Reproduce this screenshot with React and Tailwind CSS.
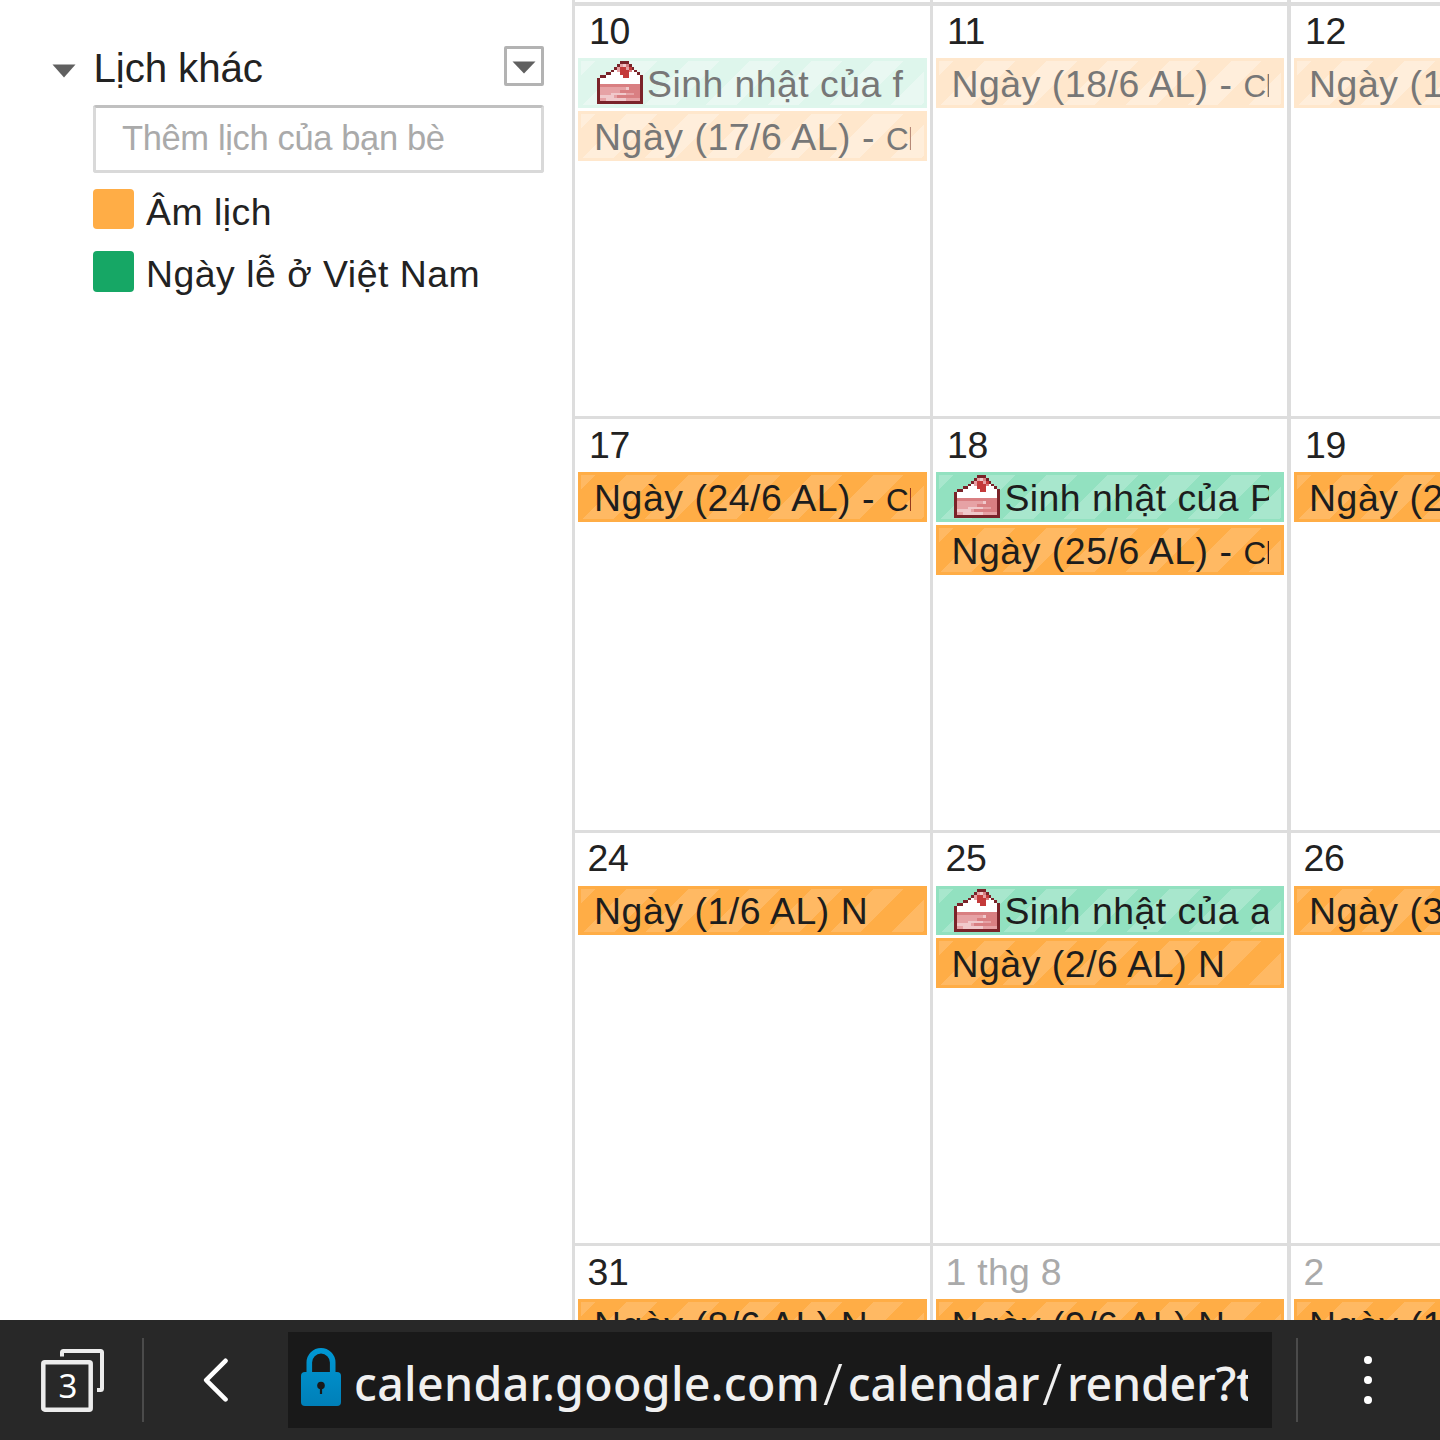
import React from "react";

const STRIPES =
  "bg-[repeating-linear-gradient(135deg,var(--light)_0px,var(--light)_10.6px,transparent_10.6px,transparent_32.5px,var(--light)_32.5px,var(--light)_43.5px)]";

const TONES = {
  orange: "bg-[#ffad46] text-[#1d1d1d] [--light:#ffb963]",
  green: "bg-[#92e1c0] text-[#1d1d1d] [--light:#a8e7cd]",
  orangePast: "bg-[#ffe7cc] text-[#777777] [--light:#ffeedb]",
  greenPast: "bg-[#def6ec] text-[#777777] [--light:#e9f8f2]",
};

const CAKE_COLORS = {
  d: "#7a2329",
  r: "#c43a3a",
  p: "#e6a2a5",
  m: "#d97f82",
  l: "#f0c9cb",
  w: "#ffffff",
};

const CAKE = [
  "........ddd.....",
  ".......dplmd....",
  "......dprrprd...",
  ".....dwprrrmwd..",
  "...ddwwwrrrwwwd.",
  ".ddwwwwwwrrwwwwd",
  "dwwwwwwwwwwwwwwd",
  "dwwwwwwwwwwwwwwd",
  "dmmmmmmmmmmmmmmd",
  "dppppppppplmmmmd",
  "dpppppppmmmmmmmd",
  "dpppplllllpppmmd",
  "dlllllpmmmmmmmmd",
  "dpplllllllpppppd",
  "dddddddddddddddd",
];

const WEEKS = [
  {
    row: "h-[410px]",
    head: "h-[52px] pl-[11px] leading-[50px]",
    first: "h-[50px] leading-[46px]",
    days: [
      {
        label: "10",
        events: [
          { tone: "greenPast", cake: true, text: "Sinh nhật của f" },
          { tone: "orangePast", text: "Ngày (17/6 AL) - ", note: "Ch" },
        ],
      },
      { label: "11", events: [{ tone: "orangePast", text: "Ngày (18/6 AL) - ", note: "Ch" }] },
      { label: "12", events: [{ tone: "orangePast", text: "Ngày (19" }] },
    ],
  },
  {
    row: "h-[411px]",
    head: "h-[53px] pl-[11px] leading-[52px]",
    first: "h-[50px] leading-[46px]",
    days: [
      { label: "17", events: [{ tone: "orange", text: "Ngày (24/6 AL) - ", note: "Ch" }] },
      {
        label: "18",
        events: [
          { tone: "green", cake: true, text: "Sinh nhật của P" },
          { tone: "orange", text: "Ngày (25/6 AL) - ", note: "Ch" },
        ],
      },
      { label: "19", events: [{ tone: "orange", text: "Ngày (26" }] },
    ],
  },
  {
    row: "h-[410px]",
    head: "h-[53px] pl-[9.5px] leading-[51px]",
    first: "h-[49px] leading-[44px]",
    days: [
      { label: "24", events: [{ tone: "orange", text: "Ngày (1/6 AL) N" }] },
      {
        label: "25",
        events: [
          { tone: "green", cake: true, text: "Sinh nhật của a" },
          { tone: "orange", text: "Ngày (2/6 AL) N" },
        ],
      },
      { label: "26", events: [{ tone: "orange", text: "Ngày (3/" }] },
    ],
  },
  {
    row: "h-[410px]",
    head: "h-[53px] pl-[9.5px] leading-[52px]",
    first: "h-[50px] leading-[46px]",
    days: [
      { label: "31", events: [{ tone: "orange", text: "Ngày (8/6 AL) N" }] },
      { label: "1 thg 8", muted: true, events: [{ tone: "orange", text: "Ngày (9/6 AL) N" }] },
      { label: "2", muted: true, events: [{ tone: "orange", text: "Ngày (10" }] },
    ],
  },
];

function CakeIcon() {
  return (
    <svg
      viewBox="0 0 16 15"
      className="mr-1 ml-[3px] h-[43px] w-[46px] shrink-0"
      preserveAspectRatio="none"
      shapeRendering="crispEdges"
      aria-hidden
    >
      {CAKE.map((line, y) =>
        line
          .split("")
          .map((c, x) =>
            c === "." ? null : (
              <rect key={`${x}-${y}`} x={x} y={y} width="1" height="1" fill={CAKE_COLORS[c]} />
            )
          )
      )}
    </svg>
  );
}

function Event({ tone, cake, text, note, size, inset }) {
  return (
    <div className={`shrink-0 p-[3px] ${size} ${TONES[tone]}`}>
      <div className={`h-full ${inset} ${STRIPES}`}>
        <div className="flex h-full overflow-x-clip whitespace-pre">
          {cake && <CakeIcon />}
          <span className={`text-[37.4px] ${cake ? "tracking-[0.46px]" : "tracking-[0.55px]"}`}>
            {text}
            {note && <span className="text-[31.5px] tracking-[-0.7px]">{note}</span>}
          </span>
        </div>
      </div>
    </div>
  );
}

function Day({ label, muted, events, head, first, inset }) {
  return (
    <div className="flex min-w-0 flex-col overflow-hidden px-[3px]">
      <div
        className={`shrink-0 text-[37.4px] ${head} ${
          muted ? "tracking-[0.3px] text-[#aaaaaa]" : "tracking-[-0.4px] text-[#222222]"
        }`}
      >
        {label}
      </div>
      <div className="flex flex-col gap-[3px]">
        {events.map((event, i) => (
          <Event
            key={event.text}
            size={i === 0 ? first : "h-[50px] leading-[46px]"}
            inset={inset}
            {...event}
          />
        ))}
      </div>
    </div>
  );
}

function Week({ row, head, first, days }) {
  return (
    <div className={`grid shrink-0 grid-cols-[355px_3px_354px_4px_355px] ${row}`}>
      <Day {...days[0]} head={head} first={first} inset="px-[13px]" />
      <div className="bg-[#dddddd]" />
      <Day {...days[1]} head={head} first={first} inset="px-[12.4px]" />
      <div className="bg-[#dddddd]" />
      <Day {...days[2]} head={head} first={first} inset="px-[12px]" />
    </div>
  );
}

function MonthGrid() {
  return (
    <main className="flex min-w-0 flex-1 flex-col overflow-hidden border-l-[3px] border-[#dddddd]">
      <div className="grid h-[2px] shrink-0 grid-cols-[355px_3px_354px_4px_355px]">
        <div />
        <div className="bg-[#dddddd]" />
        <div />
        <div className="bg-[#dddddd]" />
      </div>
      {WEEKS.map((week, i) => (
        <React.Fragment key={i}>
          <div className={`shrink-0 bg-[#dddddd] ${i === 0 ? "h-1" : "h-[3px]"}`} />
          <Week {...week} />
        </React.Fragment>
      ))}
    </main>
  );
}

function Caret({ className }) {
  return (
    <svg viewBox="0 0 24 14" className={className} preserveAspectRatio="none" aria-hidden>
      <path d="M0.5 0.5H23.5L12 13.5Z" fill="#606060" />
    </svg>
  );
}

function CalendarItem({ color, name }) {
  return (
    <div className="flex h-[62px] items-start">
      <span className={`w-[41px] shrink-0 rounded-[4px] ${color}`} />
      <span className="ml-[12px] text-[37.4px] leading-[46px] tracking-[0.5px] whitespace-nowrap">{name}</span>
    </div>
  );
}

function Sidebar() {
  return (
    <aside className="w-[572px] shrink-0 pt-[46px] pr-[28px] pl-[52px] text-[#222222]">
      <div className="flex h-[59px] items-start">
        <Caret className="mt-[18px] h-[14px] w-[24px]" />
        <h2 className="ml-[17.5px] flex-1 text-[40.3px] leading-[46px] tracking-[-0.1px]">Lịch khác</h2>
        <button
          type="button"
          aria-label="Lịch khác"
          className="flex h-10 w-10 justify-center rounded-[2px] border-[3px] border-[#b3b3b3] pt-[12px]"
        >
          <Caret className="h-[13px] w-[24px] shrink-0" />
        </button>
      </div>
      <div className="ml-[41px]">
        <div className="h-[68px] rounded-[3px] border-[3px] border-[#d9d9d9] border-t-[#c0c0c0] pl-[26px] text-[34.5px] leading-[60px] tracking-[-0.36px] text-[#aaaaaa]">
          Thêm lịch của bạn bè
        </div>
        <div className="mt-4">
          <CalendarItem color="h-[40px] bg-[#ffad46]" name="Âm lịch" />
          <CalendarItem color="h-[41px] bg-[#16a765]" name="Ngày lễ ở Việt Nam" />
        </div>
      </div>
    </aside>
  );
}

function TabsIcon() {
  return (
    <svg viewBox="0 0 64 64" className="h-16 w-16" aria-hidden>
      <g fill="none" stroke="#ececec" strokeWidth="4.5">
        <rect x="2.3" y="13.3" width="47.4" height="47.4" rx="1.5" />
        <path d="M21 7.5V3.5Q21 2 22.5 2H59.5Q61 2 61 3.5V39.5Q61 41 59.5 41H56" strokeWidth="4" />
      </g>
      <text x="27" y="48.5" textAnchor="middle" fontSize="33" fill="#ffffff" fontFamily="Noto Sans, sans-serif">
        3
      </text>
    </svg>
  );
}

function LockIcon() {
  return (
    <svg viewBox="0 0 40 58" className="h-[58px] w-10 shrink-0" aria-hidden>
      <defs>
        <linearGradient id="lock" x1="0" y1="0" x2="0" y2="58" gradientUnits="userSpaceOnUse">
          <stop offset="0" stopColor="#0098d4" />
          <stop offset="1" stopColor="#007fb8" />
        </linearGradient>
      </defs>
      <path d="M8.3 27V14.5a11.7 11.7 0 0 1 23.4 0V27" fill="none" stroke="url(#lock)" strokeWidth="5.6" />
      <rect y="24" width="40" height="34" rx="4" fill="url(#lock)" />
      <circle cx="20" cy="37.5" r="3.8" fill="#191919" />
      <path d="M18.9 39H21.1V46H18.9Z" fill="#191919" />
    </svg>
  );
}

function Slash() {
  return (
    <span className="mx-[3px] align-[-4px] text-[57px] leading-none font-light tracking-[2px]">/</span>
  );
}

function BrowserBar() {
  return (
    <footer className="flex h-[120px] shrink-0 items-center bg-[#282828]">
      <div className="flex w-[142px] pt-[2px] pl-[41px]">
        <TabsIcon />
      </div>
      <div className="h-[84px] w-[2px] bg-[#4b4b4b]" />
      <div className="w-[144px] pl-[59px]">
        <svg viewBox="0 0 26 46" className="h-[46px] w-[26px]" aria-hidden>
          <path
            d="M22.5 3.8L3.2 23.1L22.5 42.4"
            fill="none"
            stroke="#ffffff"
            strokeWidth="4.6"
            strokeLinecap="round"
            strokeLinejoin="round"
          />
        </svg>
      </div>
      <div className="flex h-24 w-[984px] items-start bg-[#191919] pt-4 pr-6 pl-[13px]">
        <LockIcon />
        <div className="ml-[13px] h-[72px] flex-1 overflow-hidden font-['Noto_Sans',sans-serif] text-[46.5px] leading-[70px] font-medium tracking-[-0.2px] whitespace-nowrap text-[#f0f0f0]">
          <span className="tracking-[0.33px]">calendar.google.com</span>
          <Slash />
          calendar
          <Slash />
          render?t
        </div>
      </div>
      <div className="ml-6 h-[84px] w-[2px] bg-[#4b4b4b]" />
      <div className="ml-[66px] flex flex-col gap-3">
        <span className="h-2 w-2 rounded-full bg-white" />
        <span className="h-2 w-2 rounded-full bg-white" />
        <span className="h-2 w-2 rounded-full bg-white" />
      </div>
    </footer>
  );
}

export default function App() {
  return (
    <div className="flex h-[1440px] w-[1440px] flex-col overflow-hidden bg-white font-['Liberation_Sans',Arial,sans-serif]">
      <div className="flex min-h-0 flex-1">
        <Sidebar />
        <MonthGrid />
      </div>
      <BrowserBar />
    </div>
  );
}
